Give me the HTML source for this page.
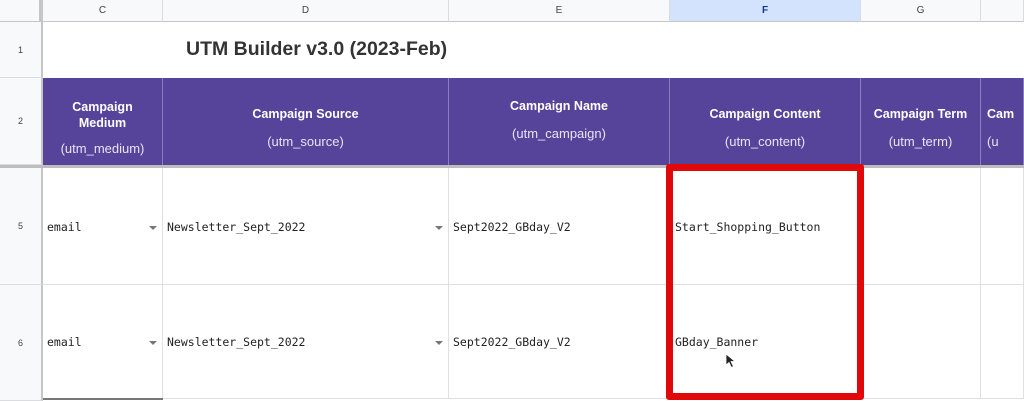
<!DOCTYPE html>
<html><head><style>
*{margin:0;padding:0;box-sizing:border-box}
body{width:1024px;height:401px;overflow:hidden;background:#fff;position:relative;font-family:"Liberation Sans",sans-serif}
.a{position:absolute}
.ch{top:0;height:22px;background:#f8f9fa;border-right:1px solid #dadce0;border-bottom:1px solid #c4c7c5;font-size:10px;color:#444;text-align:center;line-height:22px}
.rh{left:0;width:43px;background:#f8f9fa;border-right:2px solid #c4c7c5;border-bottom:1px solid #dadce0;font-size:9px;color:#444;text-align:center}
.hd{top:78px;height:87px;background:#56449a;border-right:1px solid #8a7fbf;color:#fff;text-align:center;font-weight:bold;font-size:12.5px}
.hd .s{font-weight:normal;font-size:13px;color:#e8e4f4}
.c{border-right:1px solid #e0e0e0;border-bottom:1px solid #e0e0e0}
.m{font-family:"DejaVu Sans Mono","Liberation Mono",monospace;font-size:11.5px;color:#222}
.dd{width:0;height:0;border-left:4px solid transparent;border-right:4px solid transparent;border-top:4px solid #777}
</style></head><body>
<div class="a ch" style="left:0;width:43px;border-right:4px solid #c4c7c5"></div>
<div class="a ch" style="left:43px;width:120px">C</div>
<div class="a ch" style="left:163px;width:286px">D</div>
<div class="a ch" style="left:449px;width:221px">E</div>
<div class="a ch" style="left:670px;width:191px;background:#d3e3fd;font-weight:bold;color:#0b3b8c">F</div>
<div class="a ch" style="left:861px;width:120px">G</div>
<div class="a ch" style="left:981px;width:43px"></div>

<div class="a rh" style="top:22px;height:56px;line-height:56px">1</div>
<div class="a rh" style="top:78px;height:87px;line-height:87px">2</div>
<div class="a rh" style="top:168px;height:117px;line-height:117px">5</div>
<div class="a rh" style="top:285px;height:116px;line-height:116px">6</div>

<div class="a" style="left:186px;top:38px;font-size:19.5px;font-weight:bold;color:#333">UTM Builder v3.0 (2023-Feb)</div>

<div class="a hd" style="left:43px;width:120px;padding-top:21px;line-height:16px">Campaign<br>Medium<div class="s" style="margin-top:10px">(utm_medium)</div></div>
<div class="a hd" style="left:163px;width:286px;padding-top:29px">Campaign Source<div class="s" style="margin-top:13px">(utm_source)</div></div>
<div class="a hd" style="left:449px;width:221px;padding-top:21px">Campaign Name<div class="s" style="margin-top:13px">(utm_campaign)</div></div>
<div class="a hd" style="left:670px;width:191px;padding-top:29px">Campaign Content<div class="s" style="margin-top:13px">(utm_content)</div></div>
<div class="a hd" style="left:861px;width:120px;padding-top:29px">Campaign Term<div class="s" style="margin-top:13px">(utm_term)</div></div>
<div class="a hd" style="left:981px;width:43px;padding-top:29px;text-align:left;padding-left:6px;overflow:hidden;white-space:nowrap">Cam<div class="s" style="margin-top:13px">(u</div></div>
<div class="a" style="left:0;top:165px;width:1024px;height:3px;background:#bdbdbd"></div>

<div class="a c" style="left:43px;top:168px;width:120px;height:117px"></div>
<div class="a c" style="left:163px;top:168px;width:286px;height:117px"></div>
<div class="a c" style="left:449px;top:168px;width:221px;height:117px"></div>
<div class="a c" style="left:670px;top:168px;width:191px;height:117px"></div>
<div class="a c" style="left:861px;top:168px;width:120px;height:117px"></div>
<div class="a c" style="left:981px;top:168px;width:43px;height:117px"></div>
<div class="a c" style="left:43px;top:285px;width:120px;height:114px"></div>
<div class="a c" style="left:163px;top:285px;width:286px;height:114px"></div>
<div class="a c" style="left:449px;top:285px;width:221px;height:114px"></div>
<div class="a c" style="left:670px;top:285px;width:191px;height:114px"></div>
<div class="a c" style="left:861px;top:285px;width:120px;height:114px"></div>
<div class="a c" style="left:981px;top:285px;width:43px;height:114px"></div>
<div class="a" style="left:43px;top:398px;width:120px;height:2px;background:#777"></div>

<div class="a m" style="left:47px;top:220px">email</div>
<div class="a dd" style="left:149px;top:226px"></div>
<div class="a m" style="left:167px;top:220px">Newsletter_Sept_2022</div>
<div class="a dd" style="left:435px;top:226px"></div>
<div class="a m" style="left:453px;top:220px">Sept2022_GBday_V2</div>
<div class="a m" style="left:675px;top:220px">Start_Shopping_Button</div>

<div class="a m" style="left:47px;top:335px">email</div>
<div class="a dd" style="left:149px;top:341px"></div>
<div class="a m" style="left:167px;top:335px">Newsletter_Sept_2022</div>
<div class="a dd" style="left:435px;top:341px"></div>
<div class="a m" style="left:453px;top:335px">Sept2022_GBday_V2</div>
<div class="a m" style="left:675px;top:335px">GBday_Banner</div>

<svg class="a" style="left:725px;top:353px" width="12" height="16" viewBox="0 0 12 16"><path d="M1 1 L1 12 L4 9.5 L6.5 14.5 L8.5 13.5 L6 8.5 L10 8.5 Z" fill="#222" stroke="#fff" stroke-width="0.8"/></svg>

<div class="a" style="left:666px;top:164px;width:198px;height:236px;border:7px solid #e00808;border-radius:3px"></div>
</body></html>
